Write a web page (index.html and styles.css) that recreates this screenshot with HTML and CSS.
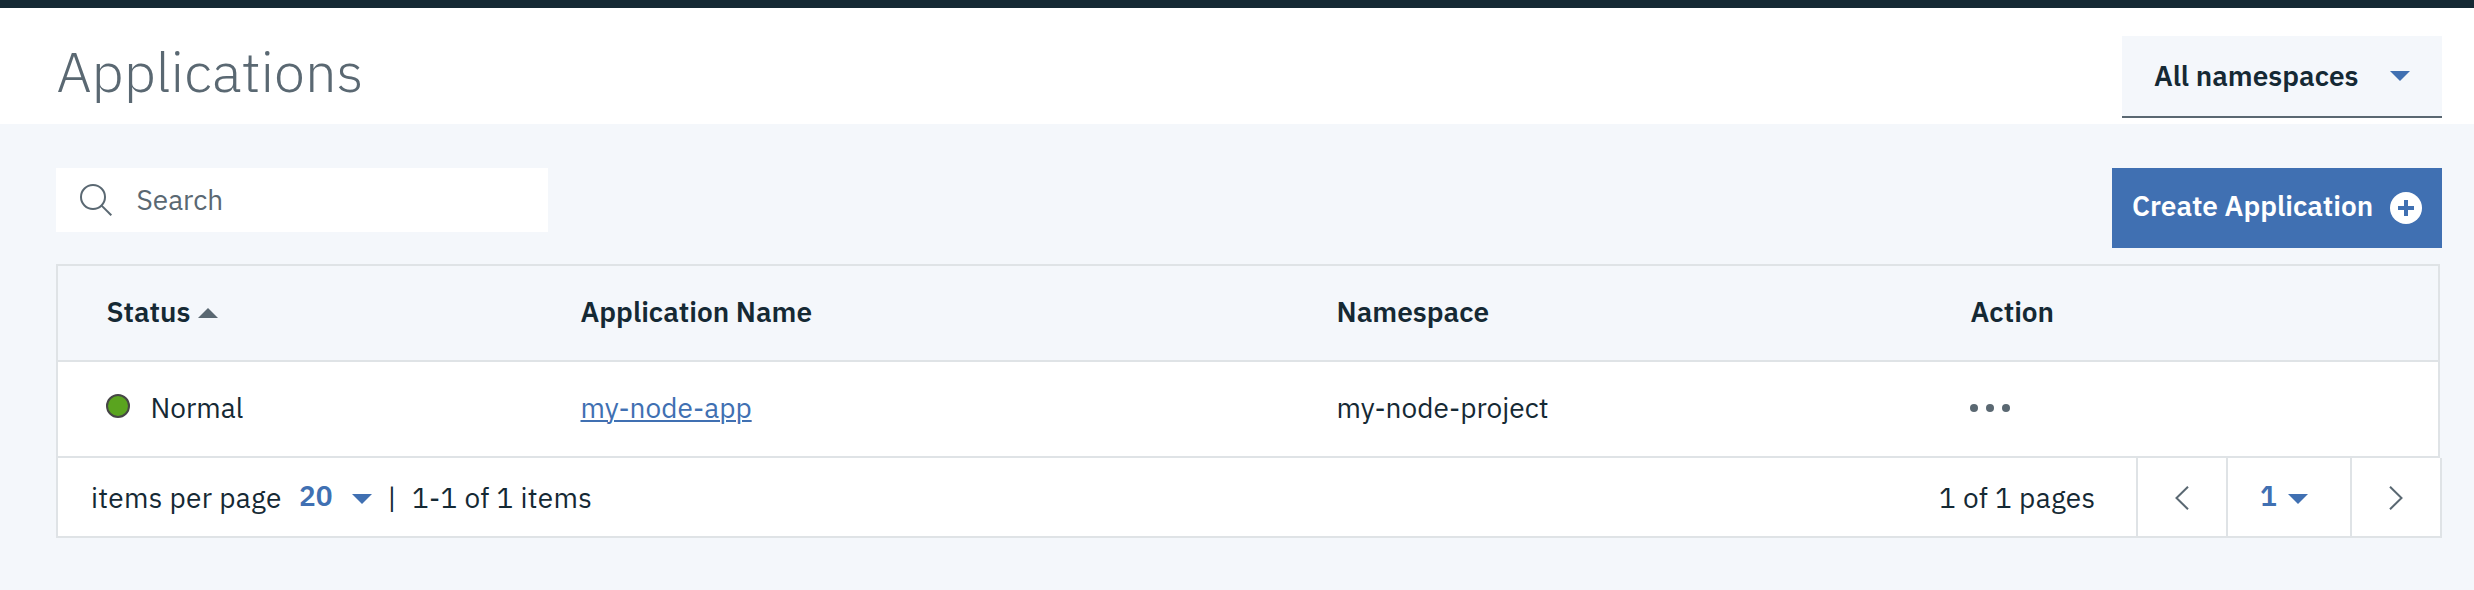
FILE: index.html
```html
<!DOCTYPE html>
<html lang="en">
<head>
<meta charset="utf-8">
<title>Applications</title>
<link rel="stylesheet" href="styles.css">
</head>
<body>
<div class="topbar"></div>
<header class="header">
  <h1 class="title">Applications</h1>
  <div class="dropdown"><span class="dropdown-label">All namespaces</span><svg class="caret" viewBox="0 0 20 10"><path d="M0 0h20L10 10z"/></svg></div>
</header>
<main class="main">
  <div class="toolbar">
    <div class="search">
      <svg class="search-icon" viewBox="0 0 32 32"><circle cx="13" cy="13" r="12"/><path d="M21.6 21.6L31.3 31.3"/></svg>
      <span class="search-label">Search</span>
    </div>
    <button class="create"><span class="create-label">Create Application</span><svg class="plus" viewBox="0 0 32 32"><circle cx="16" cy="16" r="16"/><path d="M8 16h16M16 8v16"/></svg></button>
  </div>
  <section class="table">
    <div class="row head">
      <div class="cell"><span class="h-status">Status</span><svg class="caret sort" viewBox="0 0 20 10"><path d="M0 10h20L10 0z"/></svg></div>
      <div class="cell"><span class="h-name">Application Name</span></div>
      <div class="cell"><span class="h-ns">Namespace</span></div>
      <div class="cell"><span class="h-action">Action</span></div>
    </div>
    <div class="row">
      <div class="cell"><span class="dot"></span><span class="normal">Normal</span></div>
      <div class="cell"><a class="link" href="#">my-node-app</a></div>
      <div class="cell"><span class="project">my-node-project</span></div>
      <div class="cell"><svg class="more" viewBox="0 0 40 8"><circle cx="4" cy="4" r="4"/><circle cx="20" cy="4" r="4"/><circle cx="36" cy="4" r="4"/></svg></div>
    </div>
  </section>
  <footer class="pagination">
    <span class="per-page">items per page</span>
    <span class="size">20</span>
    <svg class="caret size-caret" viewBox="0 0 20 10"><path d="M0 0h20L10 10z"/></svg>
    <span class="divider">|</span>
    <span class="range">1-1 of 1 items</span>
    <span class="pages">1 of 1 pages</span>
    <div class="pager"><svg class="chevron" viewBox="0 0 14 24"><path d="M13 .7L1.5 12L13 23.3"/></svg></div>
    <div class="pager current"><span class="page-num">1</span><svg class="caret page-caret" viewBox="0 0 20 10"><path d="M0 0h20L10 10z"/></svg></div>
    <div class="pager"><svg class="chevron" viewBox="0 0 14 24"><path d="M1 .7L12.5 12L1 23.3"/></svg></div>
  </footer>
</main>
</body>
</html>
```
FILE: styles.css
```css
* { box-sizing: border-box; }
body {
  margin: 0;
  height: 590px;
  background: #f4f7fb;
  color: #152934;
  font: 400 28px/36px "IBM Plex Sans", Roboto, sans-serif;
  white-space: nowrap;
}
svg { display: block; flex: none; }
.topbar { height: 8px; background: #152934; }
.header {
  display: flex;
  justify-content: space-between;
  align-items: flex-start;
  height: 116px;
  padding: 28px 32px 0 56.5px;
  background: #fff;
}
.title {
  margin: -1px 0 0;
  color: #5a6872;
  font-size: 56px;
  font-weight: 300;
  line-height: 72px;
}
.dropdown {
  display: flex;
  align-items: center;
  justify-content: space-between;
  width: 320px;
  height: 82px;
  padding: 0 32px;
  border-bottom: 2px solid #5a6872;
  background: #f4f7fb;
}
.dropdown-label { font-weight: 600; }
.caret { width: 20px; height: 10px; fill: #4070b2; }
.main { padding: 44px 32px 0 56px; }
.toolbar {
  display: flex;
  justify-content: space-between;
  align-items: flex-start;
  height: 96px;
}
.search {
  display: flex;
  align-items: center;
  gap: 24.5px;
  width: 492px;
  height: 64px;
  padding-left: 24px;
  background: #fff;
}
.search-icon { width: 32px; height: 32px; fill: none; stroke: #5a6872; stroke-width: 2; }
.search-label { color: #5a6872; }
.create {
  display: flex;
  align-items: center;
  justify-content: space-between;
  width: 330px;
  height: 80px;
  padding: 0 20px;
  border: 0;
  background: #4070b2;
  color: #fff;
  font: inherit;
  font-weight: 600;
}
.create-label { padding-bottom: 4px; }
.plus { width: 32px; height: 32px; fill: #fff; }
.plus path { stroke: #4070b2; stroke-width: 4; }
.table {
  width: 2384px;
  border: 2px solid #dfe3e6;
  border-bottom: 0;
}
.row {
  display: grid;
  grid-template-columns: 474.5px 756px 633.5px 1fr;
  height: 96px;
  padding: 0 0 2px 48px;
  border-bottom: 2px solid #dfe3e6;
  background: #fff;
}
.head { background: #f4f7fb; font-weight: 600; }
.cell { display: flex; align-items: center; }
.h-status { width: 91.5px; margin-left: 0.5px; }
.h-action { margin-left: 0.5px; }
.sort { margin-top: 2px; fill: #5a6872; }
.dot {
  width: 24px;
  height: 24px;
  margin: 0 20.5px 4px 0;
  border: 2px solid #464646;
  border-radius: 50%;
  background: #5aa41f;
}
.link {
  color: #4070b2;
  text-decoration-thickness: 2px;
  text-underline-offset: 2px;
}
.more { width: 40px; height: 8px; fill: #5a6872; }
.pagination {
  display: flex;
  align-items: center;
  height: 80px;
  border: 2px solid #dfe3e6;
  border-top: 0;
  background: #fff;
}
.per-page { width: 208px; margin-left: 33px; padding-top: 2px; letter-spacing: 0.3px; }
.size { width: 53px; margin-top: -2px; color: #4070b2; font-weight: 600; }
.size-caret { margin-top: 3px; }
.divider { width: 40px; padding-top: 2px; text-align: center; }
.range { padding-top: 2px; letter-spacing: 0.28px; }
.pages { width: 197px; margin-left: auto; padding-top: 2px; letter-spacing: 0.3px; }
.pager {
  display: flex;
  align-items: center;
  justify-content: center;
  width: 90px;
  height: 78px;
  border-left: 2px solid #dfe3e6;
}
.current { width: 124px; justify-content: flex-start; padding-left: 32px; }
.page-num { width: 28px; margin-top: -2px; color: #4070b2; font-weight: 600; }
.page-caret { margin-top: 3px; }
.chevron { width: 14px; height: 24px; margin-top: 2px; fill: none; stroke: #5a6872; stroke-width: 2; }
```
